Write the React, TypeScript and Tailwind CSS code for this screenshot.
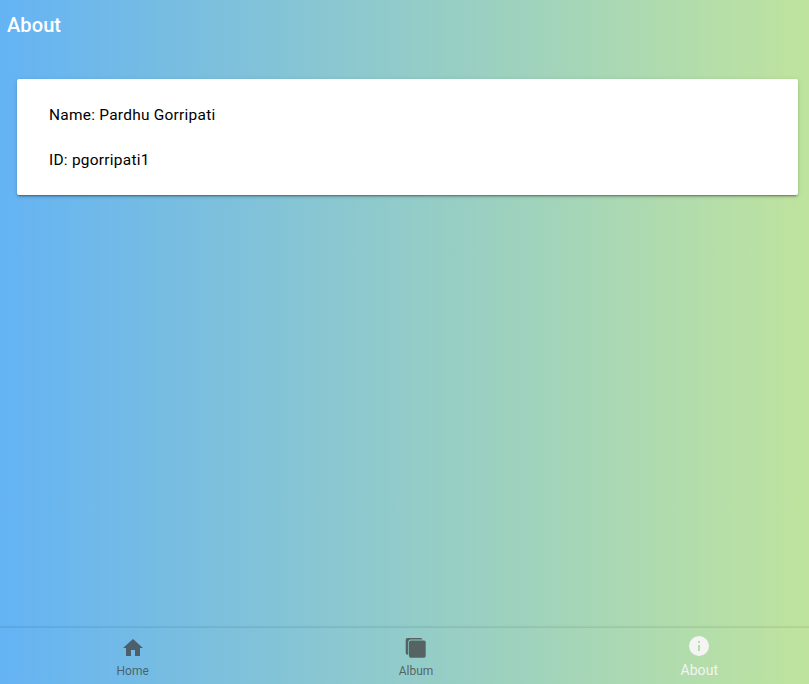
function Tab({ label, active, children }: { label: string; active?: boolean; children: React.ReactNode }) {
  return (
    <button className={`flex flex-1 flex-col items-center ${active ? "pt-1.5 text-[#f4f4f4]" : "pt-2 text-[#404040]/75"}`}>
      <svg viewBox="0 0 24 24" className="h-6 w-6 shrink-0" fill="currentColor">{children}</svg>
      <span className={active ? "text-[14px] leading-[24px] tracking-[0.1px]" : "text-[12px] leading-[22px]"}>{label}</span>
    </button>
  );
}

export default function App() {
  return (
    <div className="flex h-[684px] w-full flex-col bg-linear-to-r/srgb from-[#64b3f4] to-[#c2e59c] to-103% font-['Roboto',sans-serif]">
      <header className="flex h-[56px] items-center px-[7px] pb-[6px]">
        <h1 className="text-[20px] font-medium leading-6 tracking-[0.1px] text-white">About</h1>
      </header>
      <main className="flex-1 pt-[23px] pr-[11px] pl-[17px]">
        <section className="h-[116px] rounded-[2px] bg-white px-8 pt-[26px] text-[15.45px] leading-[20px] tracking-[0.26px] text-black shadow-[0_3px_1px_-2px_rgba(0,0,0,0.2),0_2px_2px_0_rgba(0,0,0,0.14),0_1px_5px_0_rgba(0,0,0,0.12)]">
          <p>Name: Pardhu Gorripati</p>
          <p className="mt-[25px]">ID: pgorripati1</p>
        </section>
      </main>
      <nav className="-ml-[9px] flex h-[57px] w-[850px] border-t border-black/8 shadow-[0_-1px_1px_rgba(0,0,0,0.05)]">
        <Tab label="Home"><path d="M10 20v-6h4v6h5v-8h3L12 3 2 12h3v8z" /></Tab>
        <Tab label="Album"><path d="M18.500 4V3.800A1.800 1.800 0 0 0 16.700 2H3.500A1.800 1.800 0 0 0 1.700 3.800v13.200a1.800 1.800 0 0 0 1.800 1.800H4.300V6A2.500 2.500 0 0 1 6.800 3.500h11.700z" /><rect x="5" y="4.500" width="16.700" height="17.200" rx="1.800" /></Tab>
        <Tab label="About" active><path d="M12 2a10 10 0 1 0 0 20 10 10 0 0 0 0-20zm1 15h-2v-6h2v6zm0-8h-2V7h2v2z" /></Tab>
      </nav>
    </div>
  );
}
